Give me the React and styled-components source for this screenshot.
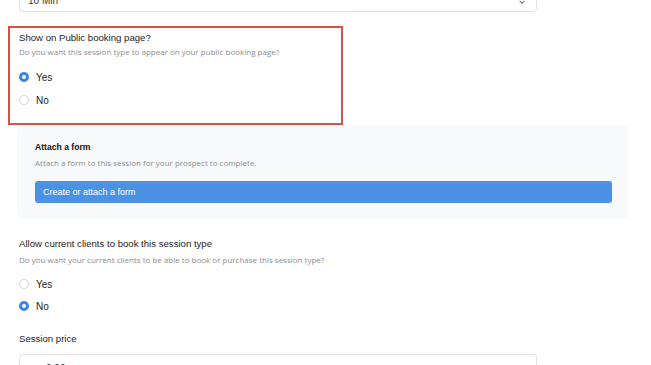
import React from 'react'
import styled, { createGlobalStyle } from 'styled-components'

const GlobalStyle = createGlobalStyle`
    html, body {
        margin: 0;
        padding: 0;
        background: #ffffff;
        overflow: hidden;
    }
    body {
        font-family: 'Liberation Sans', Arial, sans-serif;
        color: #1d1d1f;
    }
`;

const Page = styled.div`
    width: 651px;
    height: 365px;
    overflow: hidden;
    padding-left: 19px;
    box-sizing: border-box;
`;

const Field = styled.div`
    width: 518px;
    height: 32px;
    box-sizing: border-box;
    border: 1px solid #e2e2e2;
    border-radius: 4px;
    display: flex;
    align-items: flex-start;
    justify-content: space-between;
    padding: ${p => p.$pad};
    font-size: 10px;
    line-height: 12px;
    color: #333;
    margin-top: ${p => p.$top || 0}px;
`;

const Highlight = styled.div`
    margin: 14px 0 0 -11px;
    width: 335px;
    height: 99px;
    box-sizing: border-box;
    border: 2px solid #d5543f;
    padding: 3px 0 0 9px;
`;

const Title = styled.div`
    font-size: 9.6px;
    line-height: 14px;
    color: #1d1d1f;
    margin-top: ${p => p.$top || 0}px;
`;

const Sub = styled.div`
    font-family: 'Open Sans', sans-serif;
    font-size: 8px;
    line-height: 10px;
    color: #8d8d8d;
    white-space: nowrap;
    margin-top: ${p => p.$top || 0}px;
`;

const RadioRow = styled.label`
    display: flex;
    align-items: center;
    gap: 7px;
    height: 16px;
    font-size: 10px;
    color: #1d1d1f;
    margin-top: ${p => p.$top || 0}px;
`;

const Dot = styled.span`
    width: 10px;
    height: 10px;
    border-radius: 50%;
    box-sizing: border-box;
    flex-shrink: 0;
    background: #ffffff;
    border: ${p => (p.$on ? '3px solid #3d86dd' : '1px solid #d6d6d6')};
`;

const Panel = styled.div`
    margin-left: -2px;
    width: 611px;
    box-sizing: border-box;
    background: #f7f9fb;
    border-radius: 5px;
    padding: 16px 18px 16px 18px;
`;

const PanelTitle = styled.div`
    font-size: 8.6px;
    font-weight: bold;
    line-height: 12px;
    color: #151515;
`;

const Button = styled.div`
    margin-top: 13px;
    width: 577px;
    height: 22px;
    border-radius: 3px;
    background: #4b91e6;
    color: #ffffff;
    font-size: 9px;
    display: flex;
    align-items: center;
    padding-left: 8px;
    box-sizing: border-box;
`;

const Chevron = () => (
    <svg width="8" height="8" viewBox="0 0 10 10" style={{ marginTop: 3 }}>
        <path d="M2 3.5 L5 6.5 L8 3.5" fill="none" stroke="#777" strokeWidth="1.3" />
    </svg>
);

const Radio = ({ on, label, top }) => (
    <RadioRow $top={top}>
        <Dot $on={on} />
        {label}
    </RadioRow>
);

export default function App() {
    return (
        <>
            <GlobalStyle />
            <Page>
                <Field $top={-20} $pad="14px 10px 0 8px">
                    <span>10 Min</span>
                    <Chevron />
                </Field>
                <Highlight>
                    <Title>Show on Public booking page?</Title>
                    <Sub $top={2}>Do you want this session type to appear on your public booking page?</Sub>
                    <Radio on label="Yes" top={12} />
                    <Radio label="No" top={7} />
                </Highlight>
                <Panel>
                    <PanelTitle>Attach a form</PanelTitle>
                    <Sub $top={5}>Attach a form to this session for your prospect to complete.</Sub>
                    <Button>Create or attach a form</Button>
                </Panel>
                <Title $top={18}>Allow current clients to book this session type</Title>
                <Sub $top={4}>Do you want your current clients to be able to book or purchase this session type?</Sub>
                <Radio label="Yes" top={11} />
                <Radio on label="No" top={6} />
                <Title $top={18}>Session price</Title>
                <Field $top={8} $pad="8px 10px 0 26px">
                    <span>0.00</span>
                </Field>
            </Page>
        </>
    )
}
